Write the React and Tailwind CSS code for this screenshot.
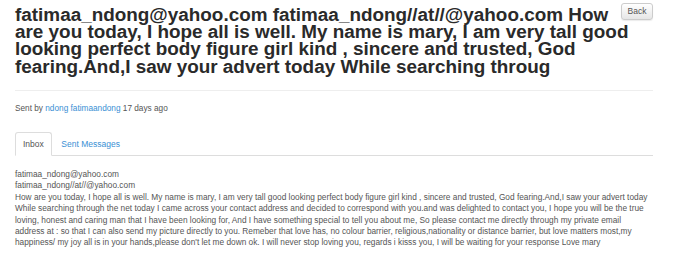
export default function App() {
  return (
    <div className="min-h-[259px] w-[680px] bg-white px-[15px] pt-[3px] font-['Liberation_Sans',Arial,sans-serif]">
      <div className="w-[638px]">
        <div className="flow-root border-b border-[#eeeeee] pb-[15px]">
          <button className="float-right ml-[8px] h-[17px] w-[32px] rounded-[3px] border border-[#cccccc] bg-gradient-to-b from-white to-[#e6e6e6] text-[8.5px] leading-[15px] text-[#555555] shadow-[0_1px_1px_rgba(0,0,0,.08)]">
            Back
          </button>
          <h1 className="mt-[2.5px] text-[18.9px] font-bold leading-[17.4px] text-[#2a2a2a]">
            fatimaa_ndong@yahoo.com fatimaa_ndong//at//@yahoo.com How are you today, I hope all is well. My name is mary, I am very tall good looking perfect body figure girl kind , sincere and trusted, God fearing.And,I saw your advert today While searching throug
          </h1>
        </div>

        <p className="mt-[11.5px] text-[8.25px] leading-[12px] text-[#555555]">
          Sent by <a className="text-[#3a8fd4]">ndong fatimaandong</a> 17 days ago
        </p>

        <div className="mt-[17.7px] flex border-b border-[#dddddd] text-[8.5px]">
          <div className="-mb-px rounded-t-[3px] border border-[#dddddd] border-b-white bg-white px-[7px] py-[4.3px] leading-[12px] text-[#555555]">
            Inbox
          </div>
          <div className="px-[9.5px] py-[5.3px] leading-[12px] text-[#3a8fd4]">
            Sent Messages
          </div>
        </div>

        <div className="mt-[13px] whitespace-nowrap text-[8.3px] leading-[11.4px] text-[#555555]">
          <div>fatimaa_ndong@yahoo.com</div>
          <div>fatimaa_ndong//at//@yahoo.com</div>
          <div>
            How are you today, I hope all is well. My name is mary, I am very tall good looking perfect body figure girl kind , sincere and trusted, God fearing.And,I saw your advert today
            <br />
            While searching through the net today I came across your contact address and decided to correspond with you.and was delighted to contact you, I hope you will be the true
            <br />
            loving, honest and caring man that I have been looking for, And I have something special to tell you about me, So please contact me directly through my private email
            <br />
            address at : so that I can also send my picture directly to you. Remeber that love has, no colour barrier, religious,nationality or distance barrier, but love matters most,my
            <br />
            happiness/ my joy all is in your hands,please don't let me down ok. I will never stop loving you, regards i kisss you, I will be waiting for your response Love mary
          </div>
        </div>
      </div>
    </div>
  );
}
